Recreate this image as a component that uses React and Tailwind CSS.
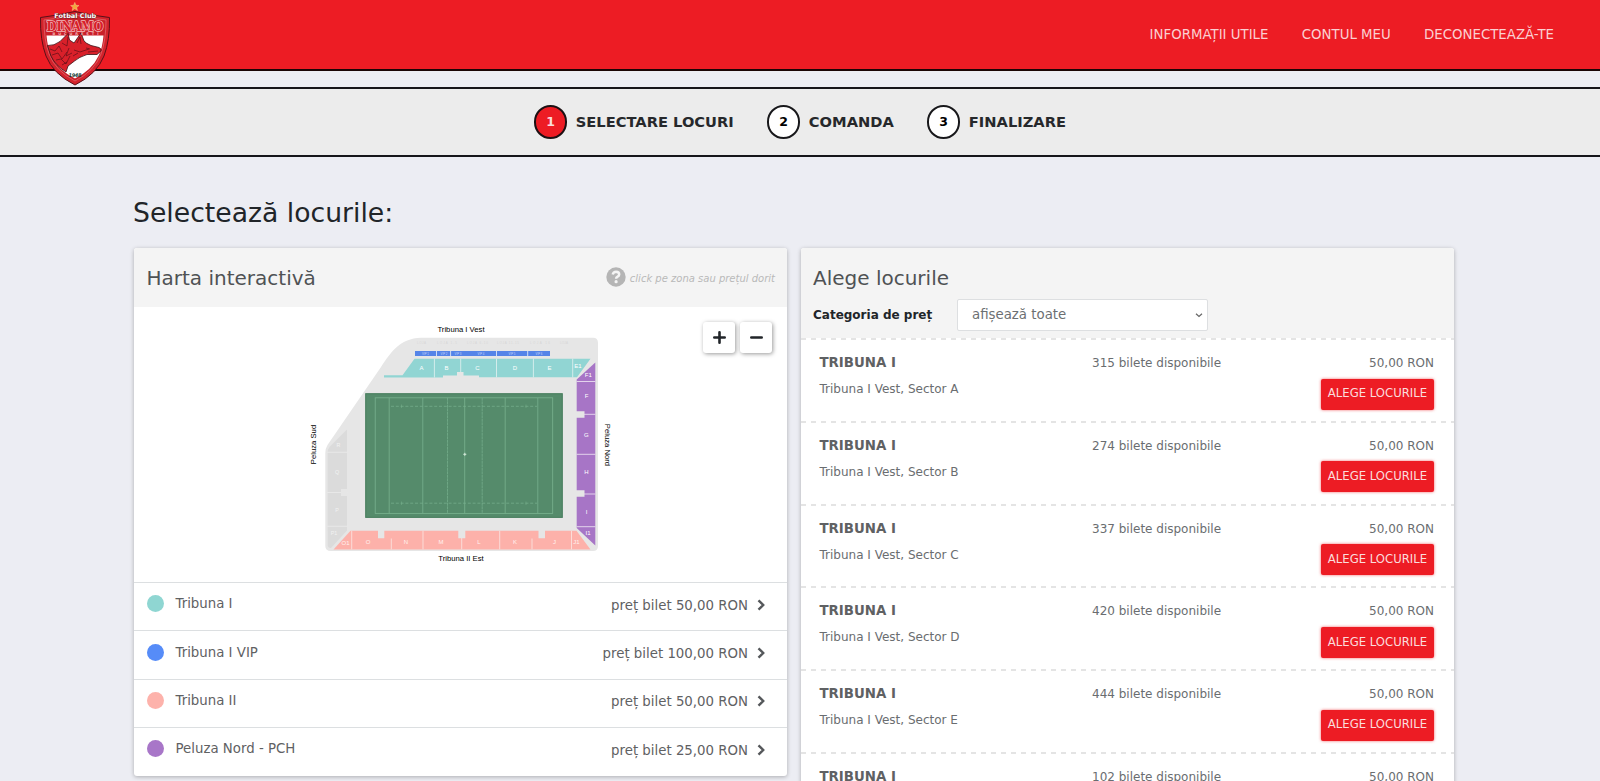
import React from "react";

const steps = [
  { n: "1", label: "SELECTARE LOCURI", active: true },
  { n: "2", label: "COMANDA" },
  { n: "3", label: "FINALIZARE" },
];

const categories = [
  { name: "Tribuna I", price: "50,00", dot: "bg-[#8fd6d2]" },
  { name: "Tribuna I VIP", price: "100,00", dot: "bg-[#568cf8]" },
  { name: "Tribuna II", price: "50,00", dot: "bg-[#fdb2ab]" },
  { name: "Peluza Nord - PCH", price: "25,00", dot: "bg-[#a876c8]" },
];

const sectors = [
  { sector: "A", seats: 315 },
  { sector: "B", seats: 274 },
  { sector: "C", seats: 337 },
  { sector: "D", seats: 420 },
  { sector: "E", seats: 444 },
  { sector: "E1", seats: 102 },
];

function Crest() {
  return (
    <svg className="absolute left-[39px] top-0 h-[88px] w-[72px]" viewBox="39 0 72 88">
      <path d="M74.800 2.400l1.200 2.900 3 .2-2.300 2 .8 3-2.700-1.700-2.700 1.700.8-3-2.300-2 3-.2z" fill="#f3a63c" stroke="#f8d9a0" strokeWidth=".4" />
      <path d="M40.500 17.500Q57 15.500 75 11.500Q92 15.500 109.500 17.500Q110 40 104 56Q97 74 75 85Q53 74 46 56Q40 40 40.500 17.500Z" fill="#d3222b" stroke="#5a1018" strokeWidth="1" />
      <path d="M44 20Q60 18.500 75 15Q90 18.500 106 20Q106 40 101 54Q94.500 71 75 81Q55.500 71 49 54Q44 40 44 20Z" fill="#c9202a" stroke="#ef8c90" strokeWidth=".5" />
      <path d="M46.500 35.500H103.500Q102.500 48 98.500 56Q92 70 75 78.500Q58 70 51.500 56Q47.500 48 46.500 35.500Z" fill="#fff" />
      <path d="M47.500 45.500Q54 46 60 41.500L68 33.500L69.500 40L74 43L81 33L84 41Q86 43.500 91 45.500L99 47.500Q102 49 101 51L97 54.500L87 54.500Q79 57 74.500 61L68 66L66 72Q55 65 51 56Z" fill="#d9202a" stroke="#3b1015" strokeWidth=".8" />
      <path d="M62 43l5 3 1-9M77 43l3-6 1 7M74 50l6 2 9-3M86 48l4 1M88 52l10-1M50 49l5 2 4-5 3 6M52 55l6-2 4 6 5-7M56 60l5-1 5 5 4-8M62 65l5-3M69 48l-3 8 6-3M73 56l5-3" fill="none" stroke="#5e1018" strokeWidth=".7" />
      <text x="75.300" y="18.200" textAnchor="middle" fontFamily="DejaVu Sans, sans-serif" fontWeight="bold" fontSize="6.300" fill="#fff" stroke="#6b2025" strokeWidth=".8" paintOrder="stroke" textLength="42" lengthAdjust="spacingAndGlyphs">Fotbal Club</text>
      <text x="75" y="30.600" textAnchor="middle" fontFamily="DejaVu Serif, serif" fontWeight="bold" fontSize="12.500" fill="#d9202a" stroke="#f3b9bb" strokeWidth="1.400" paintOrder="stroke" textLength="57" lengthAdjust="spacingAndGlyphs">DINAMO</text>
      <text x="75.500" y="34.800" textAnchor="middle" fontFamily="DejaVu Sans, sans-serif" fontWeight="bold" fontSize="3.600" fill="#f4b9bb" textLength="46">BUCUREȘTI</text>
      <text x="75" y="77" textAnchor="middle" fontFamily="DejaVu Sans, sans-serif" fontWeight="bold" fontStyle="italic" fontSize="5" fill="#173c38" textLength="13">1948</text>
    </svg>
  );
}

function Letters({ items, size = 5.4, fill = "#fff" }) {
  return items.map(([t, x, y], i) => (
    <text key={i} x={x} y={y} fontSize={size} fill={fill} textAnchor="middle" dominantBaseline="central">
      {t}
    </text>
  ));
}

function StadiumMap() {
  return (
    <svg className="block h-[260px] w-[320px]" viewBox="300 315 320 260" fontFamily="Liberation Sans, Arial, sans-serif">
      <path d="M421 337.800H593Q598 337.800 598 343V546Q598 551 593 551H331Q325.300 551 325.300 546V453Q325.300 448.500 327.500 445L381 367C391 352 400 338.500 421 337.800Z" fill="#e6e6e6" />
      <path d="M347 429.500V530.500L331 548Q327.700 548 327.700 545V452.500Q327.700 449.500 329.500 447Z" fill="#dbdbdb" />
      <path d="M327 452.300H348M327 492.500H348M327 526.300H348" stroke="#e8e8e8" strokeWidth="1" />
      <rect x="341" y="489" width="6.500" height="7" fill="#e6e6e6" />
      <Letters items={[["R", 338.500, 444.500], ["Q", 337, 471.500], ["P", 337, 510], ["P1", 334, 532.500]]} fill="#f2f2f2" />

      <rect x="365.300" y="393.300" width="197.400" height="124.500" fill="#558b6b" />
      <rect x="365.800" y="393.800" width="196.400" height="123.500" fill="none" stroke="#4a7f60" />
      <g fill="none" stroke="#79b28f" strokeWidth=".8">
        <rect x="375.200" y="397.800" width="177.500" height="115.600" />
        <path d="M389.200 397.800V513.400M422.800 397.800V513.400M464.700 397.800V513.400M505.200 397.800V513.400M537.800 397.800V513.400" />
        <path d="M447.500 397.800V513.400M482.200 397.800V513.400" strokeDasharray="3 .5" strokeWidth=".7" />
        <path d="M391 406.300H537M391 503.200H537" strokeDasharray="3 1.800" strokeWidth=".7" />
      </g>
      <path d="M401.500 404.500v3.500M401.500 501.500v3.500M526 404.500v3.500M526 501.500v3.500" stroke="#79b28f" strokeWidth=".5" />
      <path d="M463.300 454.300h3M464.800 452.800v3" stroke="#d5eadb" strokeWidth="1" />

      <g fill="#d6d6d6" fontSize="3">
        <text x="417" y="343.500" textLength="9">LOJA</text>
        <text x="437" y="343.500" textLength="20">LOJA 1-5</text>
        <text x="467" y="343.500" textLength="21">LOJA 6-10</text>
        <text x="497" y="343.500" textLength="22">LOJA 11-15</text>
        <text x="530" y="343.500" textLength="20">LOJA 16</text>
        <text x="560" y="343.500" textLength="8">LOJA</text>
      </g>
      <rect x="415" y="351" width="135" height="5" fill="#5584e8" />
      <path d="M436.500 351v5M450.600 351v5M496.500 351v5M527.700 351v5" stroke="#dfe6f5" strokeWidth=".9" />
      <Letters items={[["VIP 1", 425.500, 353.500], ["VIP 2", 444, 353.500], ["VIP 3", 458, 353.500], ["VIP 4", 481, 353.500], ["VIP 5", 512, 353.500], ["VIP 6", 539, 353.500]]} size={2.8} fill="#c5d5fa" />

      <path d="M384 375.200H402.500L414.500 358.800H590.500L577 377.300H479V375.500H463.500V372H457V375.500H443V377.500H384Z" fill="#91d5d3" />
      <path d="M434.400 358.500V377.500M460.700 358.500V372M496.500 358.500V377.500M533.400 358.500V377.500M572.700 358.500V377.500" stroke="#d4eceb" strokeWidth="1" />
      <Letters items={[["A", 421.500, 368.200], ["B", 446.500, 368.200], ["C", 477.500, 368.200], ["D", 515, 368.200], ["E", 549.500, 368.200], ["E1", 578, 366]]} size={6} />

      <path d="M595.300 362.500V545.500L576.700 528V379.500Z" fill="#a775c6" />
      <path d="M576.500 381.500H595.500M576.500 414.300H595.500M576.500 454.300H595.500M576.500 494H595.500M576.500 526.700H595.500" stroke="#e3d3ec" strokeWidth="1" />
      <path d="M576 411.200H584.500V417.800H576ZM576 490.200H584.500V496.800H576Z" fill="#e6e6e6" />
      <Letters items={[["F1", 588.300, 375.200], ["F", 586.500, 396], ["G", 586.300, 435.200], ["H", 586.300, 471.800], ["I", 586.500, 511.500], ["I1", 588, 532.700]]} size={6} />

      <path d="M333.500 549.400L350.500 530.700H576.500L590.500 549.400Z" fill="#fdb1aa" />
      <path d="M351.700 530.700V549.400M391.300 538.500V549.400M423 530.700V549.400M461.700 538V549.400M499.700 530.700V549.400M532 538.500V549.400M571.500 530.700V549.400" stroke="#fbdcd8" strokeWidth="1" />
      <path d="M378 530H384.300V538.300H378ZM458.300 530H465.300V538.300H458.300ZM538.500 530H545V538.300H538.500Z" fill="#e6e6e6" />
      <Letters items={[["O1", 345.500, 542.500], ["O", 368, 541.800], ["N", 406, 541.800], ["M", 441, 541.800], ["L", 479, 541.800], ["K", 515, 541.800], ["J", 554.500, 541.800], ["J1", 576.500, 541.800]]} size={6} fill="#fff1ef" />

      <g fill="#000" fontSize="7.700" textAnchor="middle">
        <text x="461" y="332">Tribuna I Vest</text>
        <text x="461" y="561">Tribuna II Est</text>
        <text transform="translate(316 444.500) rotate(-90)">Peluza Sud</text>
        <text transform="translate(604.700 445) rotate(90)">Peluza Nord</text>
      </g>
    </svg>
  );
}

function ZoomButton({ d }) {
  return (
    <button className="flex h-[31px] w-8 items-center justify-center rounded-[3px] bg-white shadow-[1px_1px_4px_rgba(0,0,0,0.4)]">
      <svg className="mb-px h-[13px] w-[13px]" viewBox="0 0 12 12">
        <path d={d} stroke="#212529" strokeWidth="2.400" strokeLinecap="round" />
      </svg>
    </button>
  );
}

function MapCard() {
  return (
    <section className="h-[528px] w-[653px] shrink-0 overflow-hidden rounded-[3px] bg-white shadow-[0_1px_4px_rgba(0,0,0,0.28)]">
      <header className="flex h-[59px] items-center justify-between bg-[#f4f4f4] pl-[12.500px] pr-3">
        <h2 className="text-[20px] text-[#4f5254]">Harta interactivă</h2>
        <div className="flex items-center gap-1 text-[10px] italic text-[#b9b9b9]">
          <svg className="mb-[2px] h-5 w-5" viewBox="0 0 20 20">
            <circle cx="10" cy="10" r="9.700" fill="#b5b5b5" />
            <path d="M6.700 7.600Q7.300 4.800 10.100 4.800Q13.200 4.900 13.200 7.500Q13.200 8.900 11.300 9.800Q10.100 10.500 10.100 11.700" fill="none" stroke="#f4f4f4" strokeWidth="2.500" />
            <circle cx="10.100" cy="14.700" r="1.600" fill="#f4f4f4" />
          </svg>
          <span className="pt-px">click pe zona sau prețul dorit</span>
        </div>
      </header>
      <div className="relative flex h-[275px] pl-[166px] pt-2">
        <StadiumMap />
        <div className="absolute right-[15px] top-[15px] flex gap-[5px]">
          <ZoomButton d="M1.200 6H10.800M6 1.200V10.800" />
          <ZoomButton d="M1.200 6H10.800" />
        </div>
      </div>
      <ul>
        {categories.map((c) => (
          <li key={c.name} className="flex h-[48.400px] items-center border-t border-[#dcdfe1] pl-[12.500px] pr-[22px] text-[13.333px] text-[#5f6163]">
            <span className={`mb-[6px] h-[17px] w-[17px] rounded-full ${c.dot}`} />
            <span className="mb-[5px] ml-3">{c.name}</span>
            <span className="mb-[2px] ml-auto">preț bilet {c.price} RON</span>
            <svg className="mb-1 ml-[9px] h-3 w-2" viewBox="0 0 8 12">
              <path d="M1.500 1.300L6.200 6L1.500 10.700" fill="none" stroke="#55585b" strokeWidth="2.400" />
            </svg>
          </li>
        ))}
      </ul>
    </section>
  );
}

function DashedLine() {
  return (
    <svg className="block h-[2px] w-full">
      <line x1="0" y1="1" x2="653" y2="1" stroke="#dcdcdc" strokeWidth="1.700" strokeDasharray="5 5" />
    </svg>
  );
}

function SeatsCard() {
  return (
    <section className="h-[620px] w-[652.500px] shrink-0 overflow-hidden rounded-[3px] bg-white shadow-[0_1px_4px_rgba(0,0,0,0.28)]">
      <header className="h-[90px] bg-[#f4f4f4] px-3 pt-[16px]">
        <h2 className="h-[28px] text-[20px] leading-[28px] text-[#4f5254]">Alege locurile</h2>
        <div className="mt-[7px] flex h-[32px] items-center">
          <label className="w-[144px] text-[12px] font-bold text-[#212529]">Categoria de preț</label>
          <div className="flex h-[32px] w-[251px] items-center justify-between rounded-[2px] border border-[#dddfe1] bg-white pl-[14px] pr-[4px] text-[13.333px] text-[#6c6f72]">
            afișează toate
            <svg className="h-2 w-2" viewBox="0 0 8 8">
              <path d="M1 2.700L4 5.500L7 2.700" fill="none" stroke="#666" strokeWidth="1.200" />
            </svg>
          </div>
        </div>
      </header>
      {sectors.map((s) => (
        <article key={s.sector} className="h-[82.800px]">
          <DashedLine />
          <div className="flex items-start pl-[18.500px] pr-[19.500px] pt-3 text-[12px] text-[#6a6d70]">
            <div className="w-[272.500px]">
              <h3 className="pt-px text-[13.333px] font-bold leading-[20px] text-[#5f6163]">TRIBUNA I</h3>
              <p className="mt-[8px] leading-[17px]">Tribuna I Vest, Sector {s.sector}</p>
            </div>
            <p className="pt-[1px] leading-[20px]">{s.seats} bilete disponibile</p>
            <div className="ml-auto flex flex-col items-end">
              <span className="pt-[1px] leading-[20px]">50,00 RON</span>
              <button className="mt-[5.500px] h-[31px] w-[113px] rounded-[2px] bg-[#ed1c24] text-[11.667px] text-[#fbdcdd] shadow-[0_0_3px_rgba(237,28,36,0.7)]">
                ALEGE LOCURILE
              </button>
            </div>
          </div>
        </article>
      ))}
    </section>
  );
}

export default function App() {
  return (
    <div className="h-[781px] overflow-hidden bg-[#ecedf3] font-['DejaVu_Sans',sans-serif]">
      <header className="relative flex h-[71px] items-center justify-end border-b-2 border-[#1a0506] bg-[#ed1c24] pr-[46px]">
        <Crest />
        <nav className="flex gap-[33.300px] text-[13.333px] text-[#fbd0d2]">
          <a>INFORMAȚII UTILE</a>
          <a>CONTUL MEU</a>
          <a>DECONECTEAZĂ-TE</a>
        </nav>
      </header>
      <ol className="mt-4 flex h-[70px] items-center justify-center gap-[33.300px] border-y-2 border-[#15151a] bg-[#ececec]">
        {steps.map((s) => (
          <li key={s.n} className="flex items-center gap-[8.500px] text-[14.667px] font-bold text-[#26282b]">
            <span
              className={
                s.active
                  ? "flex h-[33.300px] w-[33.300px] items-center justify-center rounded-full border-2 border-[#1c1013] bg-[#ed1c24] pt-px text-[12.500px] text-[#fbdcdd]"
                  : "flex h-[33.300px] w-[33.300px] items-center justify-center rounded-full border-2 border-[#18181b] bg-white pt-px text-[12.500px] text-black"
              }
            >
              {s.n}
            </span>
            {s.label}
          </li>
        ))}
      </ol>
      <main className="px-[134px] pt-[36px]">
        <h1 className="-ml-px h-[40px] text-[26.667px] leading-[40px] text-[#212529]">Selectează locurile:</h1>
        <div className="mt-[15px] flex items-start gap-[14px]">
          <MapCard />
          <SeatsCard />
        </div>
      </main>
    </div>
  );
}
